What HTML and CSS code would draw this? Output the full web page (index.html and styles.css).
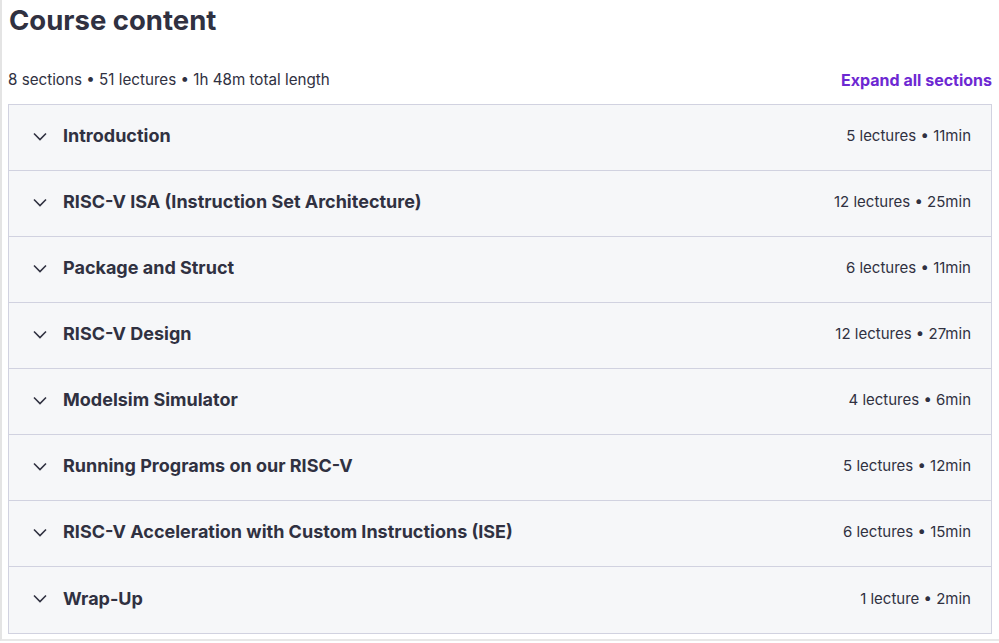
FILE: index.html
```html
<!DOCTYPE html>
<html lang="en">
<head>
<meta charset="UTF-8" />
<meta name="viewport" content="width=device-width, initial-scale=1.0" />
<title>Course content</title>
<link rel="stylesheet" href="styles.css">
</head>
<body>
<div class="page">
    <h2 class="heading">Course content</h2>

    <!-- summary line + toggle -->
    <div class="summary">
        <span>8 sections • 51 lectures • 1h 48m total length</span>
        <button class="expand-btn">Expand all sections</button>
    </div>

    <!-- ==========  SECTION LIST  ========== -->
    <div class="sections">
        <div class="section">
            <svg class="chevron" viewBox="0 0 16 16"><path d="M2 5.5l6 6 6-6"/></svg>
            <span class="section-title">Introduction</span>
            <span class="section-meta">5 lectures • 11min</span>
        </div>
        <div class="section">
            <svg class="chevron" viewBox="0 0 16 16"><path d="M2 5.5l6 6 6-6"/></svg>
            <span class="section-title">RISC-V ISA (Instruction Set Architecture)</span>
            <span class="section-meta">12 lectures • 25min</span>
        </div>
        <div class="section">
            <svg class="chevron" viewBox="0 0 16 16"><path d="M2 5.5l6 6 6-6"/></svg>
            <span class="section-title">Package and Struct</span>
            <span class="section-meta">6 lectures • 11min</span>
        </div>
        <div class="section">
            <svg class="chevron" viewBox="0 0 16 16"><path d="M2 5.5l6 6 6-6"/></svg>
            <span class="section-title">RISC-V Design</span>
            <span class="section-meta">12 lectures • 27min</span>
        </div>
        <div class="section">
            <svg class="chevron" viewBox="0 0 16 16"><path d="M2 5.5l6 6 6-6"/></svg>
            <span class="section-title">Modelsim Simulator</span>
            <span class="section-meta">4 lectures • 6min</span>
        </div>
        <div class="section">
            <svg class="chevron" viewBox="0 0 16 16"><path d="M2 5.5l6 6 6-6"/></svg>
            <span class="section-title">Running Programs on our RISC-V</span>
            <span class="section-meta">5 lectures • 12min</span>
        </div>
        <div class="section">
            <svg class="chevron" viewBox="0 0 16 16"><path d="M2 5.5l6 6 6-6"/></svg>
            <span class="section-title">RISC-V Acceleration with Custom Instructions (ISE)</span>
            <span class="section-meta">6 lectures • 15min</span>
        </div>
        <div class="section">
            <svg class="chevron" viewBox="0 0 16 16"><path d="M2 5.5l6 6 6-6"/></svg>
            <span class="section-title">Wrap-Up</span>
            <span class="section-meta">1 lecture • 2min</span>
        </div>
    </div>
</div>
</body>
</html>
```

FILE: styles.css
```css
/* ========  RESET & THEME  ======== */
*, *::before, *::after { box-sizing: border-box; margin: 0; padding: 0; }
:root {
    --ink: #303141;
    --purple: #6d28d2;
    --row-bg: #f6f7f9;
    --line: #d1d2e0;
}
body {
    font-family: Inter, "Noto Sans", sans-serif;
    color: var(--ink);
    background: white;
    height: 643px;
    overflow: hidden;
}

/* ========  PAGE  ======== */
.page {
    border-left: 2px solid #e4e4e4;
    border-bottom: 2px solid #e8e8e8;
    padding: 0 7px 5px 6px;
}
.heading {
    font-size: 27.5px;
    font-weight: 700;
    line-height: 40px;
    padding-left: 1px;
}
.summary {
    display: flex;
    justify-content: space-between;
    align-items: center;
    font-size: 15.2px;
    margin-top: 18px;
    height: 46px;
    padding-bottom: 4px;
}
.expand-btn {
    font: inherit;
    font-weight: 700;
    font-size: 16px;
    color: var(--purple);
    background: none;
    border: none;
    cursor: pointer;
    margin-top: 2px;
}

/* ========  SECTION LIST  ======== */
.sections {
    border: 1px solid var(--line);
}
.section {
    display: flex;
    align-items: center;
    height: 66px;
    padding: 0 20px 4px 23px;
    background: var(--row-bg);
    border-bottom: 1px solid var(--line);
}
.section:last-child { border-bottom: none; }
.chevron {
    width: 16px;
    height: 16px;
    fill: none;
    stroke: var(--ink);
    stroke-width: 1.6;
    margin-right: 15px;
}
.section-title {
    flex: 1;
    font-size: 18px;
    font-weight: 700;
}
.section-meta {
    font-size: 15px;
}
```
